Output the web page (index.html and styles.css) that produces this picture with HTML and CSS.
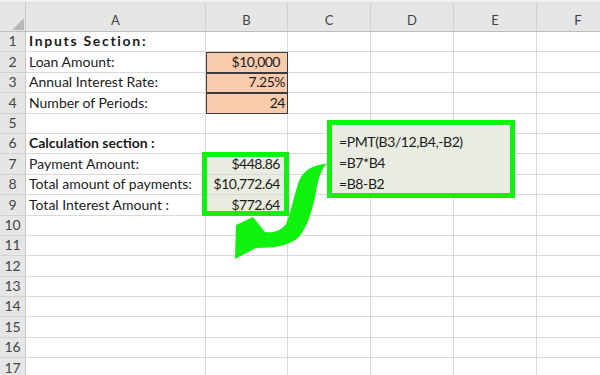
FILE: index.html
```html
<!DOCTYPE html>
<html>
<head>
<meta charset="utf-8">
<link rel="stylesheet" href="styles.css">
</head>
<body>
<div class="sheet">
  <div class="topstrip"></div>
  <div class="grid">
    <div class="corner"><span class="tri"></span></div>
    <div class="colhead">A</div>
    <div class="colhead">B</div>
    <div class="colhead">C</div>
    <div class="colhead">D</div>
    <div class="colhead">E</div>
    <div class="colhead">F</div>

    <div class="rn">1</div><div class="c bold wide">Inputs Section:</div><div class="c"></div><div class="c"></div><div class="c"></div><div class="c"></div><div class="c"></div>
    <div class="rn">2</div><div class="c">Loan Amount:</div><div class="c num orange cur">$10,000</div><div class="c"></div><div class="c"></div><div class="c"></div><div class="c"></div>
    <div class="rn">3</div><div class="c">Annual Interest Rate:</div><div class="c num orange">7.25%</div><div class="c"></div><div class="c"></div><div class="c"></div><div class="c"></div>
    <div class="rn">4</div><div class="c">Number of Periods:</div><div class="c num orange">24</div><div class="c"></div><div class="c"></div><div class="c"></div><div class="c"></div>
    <div class="rn">5</div><div class="c"></div><div class="c"></div><div class="c"></div><div class="c"></div><div class="c"></div><div class="c"></div>
    <div class="rn">6</div><div class="c bold">Calculation section :</div><div class="c"></div><div class="c"></div><div class="c"></div><div class="c"></div><div class="c"></div>
    <div class="rn">7</div><div class="c">Payment Amount:</div><div class="c num calc cur">$448.86</div><div class="c"></div><div class="c"></div><div class="c"></div><div class="c"></div>
    <div class="rn">8</div><div class="c">Total amount of payments:</div><div class="c num calc cur">$10,772.64</div><div class="c"></div><div class="c"></div><div class="c"></div><div class="c"></div>
    <div class="rn">9</div><div class="c">Total Interest Amount :</div><div class="c num calc cur">$772.64</div><div class="c"></div><div class="c"></div><div class="c"></div><div class="c"></div>
    <div class="rn">10</div><div class="c"></div><div class="c"></div><div class="c"></div><div class="c"></div><div class="c"></div><div class="c"></div>
    <div class="rn">11</div><div class="c"></div><div class="c"></div><div class="c"></div><div class="c"></div><div class="c"></div><div class="c"></div>
    <div class="rn">12</div><div class="c"></div><div class="c"></div><div class="c"></div><div class="c"></div><div class="c"></div><div class="c"></div>
    <div class="rn">13</div><div class="c"></div><div class="c"></div><div class="c"></div><div class="c"></div><div class="c"></div><div class="c"></div>
    <div class="rn">14</div><div class="c"></div><div class="c"></div><div class="c"></div><div class="c"></div><div class="c"></div><div class="c"></div>
    <div class="rn">15</div><div class="c"></div><div class="c"></div><div class="c"></div><div class="c"></div><div class="c"></div><div class="c"></div>
    <div class="rn">16</div><div class="c"></div><div class="c"></div><div class="c"></div><div class="c"></div><div class="c"></div><div class="c"></div>
    <div class="rn">17</div><div class="c"></div><div class="c"></div><div class="c"></div><div class="c"></div><div class="c"></div><div class="c"></div>
  </div>

  <div class="hl hl-values"></div>
  <div class="hl hl-formulas">
    <div>=PMT(B3/12,B4,-B2)</div>
    <div>=B7*B4</div>
    <div>=B8-B2</div>
  </div>
  <svg class="arrow" width="600" height="375" viewBox="0 0 600 375">
    <path d="M329 161 C321 168 318 180 316 192 C313 208 308 226 299 237 C291 245 276 248 256 248 L235 259 L236 225 L253 217 L265 232 C273 233 281 231 286 224 C291 212 294 196 298 184 C302 172 311 164 329 164 Z" fill="#0ef20e"/>
  </svg>
</div>
</body>
</html>
```
FILE: styles.css
```css
html, body {
  margin: 0;
  padding: 0;
  background: #ffffff;
}
.sheet {
  position: relative;
  width: 600px;
  height: 375px;
  overflow: hidden;
  font-family: Lato, "Liberation Sans", sans-serif;
  font-size: 14px;
  color: #1b1b1b;
}
.topstrip {
  height: 3px;
  background: #f3f3f3;
  border-bottom: 1px solid #dcdcdc;
  box-sizing: border-box;
}
.grid {
  display: grid;
  grid-template-columns: 26px 180px 82px 83px 83px 83px 83px;
  grid-template-rows: 29px;
  grid-auto-rows: 20.4px;
}
.corner {
  position: relative;
  background: #e6e6e6;
  border-right: 1px solid #c6c6c6;
  border-bottom: 1px solid #bdbdbd;
  box-sizing: border-box;
}
.tri {
  position: absolute;
  left: 12px;
  top: 15px;
  width: 0;
  height: 0;
  border-left: 12px solid transparent;
  border-bottom: 12px solid #b8b8b8;
}
.colhead {
  background: #e6e6e6;
  border-right: 1px solid #d0d0d0;
  border-bottom: 1px solid #bdbdbd;
  box-sizing: border-box;
  display: flex;
  align-items: center;
  justify-content: center;
  padding-top: 6px;
  color: #444;
  font-size: 13px;
}
.rn {
  background: #e6e6e6;
  border-right: 1px solid #c6c6c6;
  border-bottom: 1px solid #d2d2d2;
  box-sizing: border-box;
  display: flex;
  align-items: flex-end;
  justify-content: center;
  padding-bottom: 2px;
  color: #444;
  font-size: 14px;
}
.c {
  border-right: 1px solid #d9d9d9;
  border-bottom: 1px solid #d9d9d9;
  box-sizing: border-box;
  display: flex;
  align-items: flex-end;
  padding: 0 3px 2px 3px;
  white-space: nowrap;
  overflow: visible;
}
.bold { font-weight: 700; }
.wide { letter-spacing: 1.7px; }
.num {
  justify-content: flex-end;
  padding-right: 2px;
  letter-spacing: -0.5px;
}
.num.cur { padding-right: 7px; }
.orange {
  background: #f8cbad;
  border-right: 1px solid #3a3a3a;
  border-bottom: 1px solid #3a3a3a;
  box-shadow: inset 1px 1px 0 #3a3a3a;
}
.calc { background: #e9ece0; }
.hl {
  position: absolute;
  border: 5px solid #0ef20e;
  box-sizing: border-box;
}
.hl-values {
  left: 202px;
  top: 152px;
  width: 87px;
  height: 64px;
}
.hl-formulas {
  left: 327px;
  top: 120px;
  width: 188px;
  height: 78px;
  background: #e9ede1;
  padding: 7px 0 0 7px;
  display: flex;
  flex-direction: column;
  letter-spacing: -0.4px;
}
.hl-formulas div {
  height: 20.8px;
  line-height: 20.8px;
}
.arrow {
  position: absolute;
  left: 0;
  top: 0;
}
```
